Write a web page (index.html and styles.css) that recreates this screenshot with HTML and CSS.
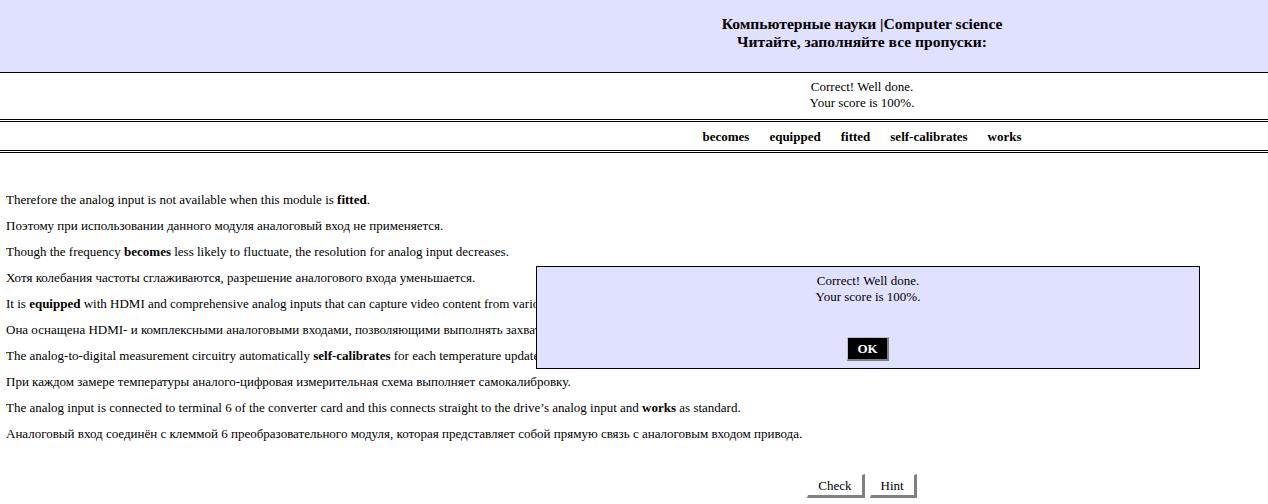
FILE: index.html
```html
<!DOCTYPE html>
<html>
<head>
<meta charset="utf-8">
<title>Computer science</title>
<link rel="stylesheet" href="styles.css">
</head>
<body>
<div class="title-block">
  <div class="centered">
    <h2 class="exercise-title">Компьютерные науки |Computer science</h2>
    <h3 class="exercise-subtitle">Читайте, заполняйте все пропуски:</h3>
  </div>
</div>
<div class="feedback-bar">
  <div class="centered">Correct! Well done.<br>Your score is 100%.</div>
</div>
<div class="word-list">
  <div class="centered words">
    <span>becomes</span><span>equipped</span><span>fitted</span><span>self-calibrates</span><span>works</span>
  </div>
</div>
<div class="main">
  <p>Therefore the analog input is not available when this module is <b>fitted</b>.</p>
  <p>Поэтому при использовании данного модуля аналоговый вход не применяется.</p>
  <p>Though the frequency <b>becomes</b> less likely to fluctuate, the resolution for analog input decreases.</p>
  <p>Хотя колебания частоты сглаживаются, разрешение аналогового входа уменьшается.</p>
  <p>It is <b>equipped</b> with HDMI and comprehensive analog inputs that can capture video content from various analog and digital sources.</p>
  <p>Она оснащена HDMI- и комплексными аналоговыми входами, позволяющими выполнять захват видео с различных аналоговых и цифровых источников.</p>
  <p>The analog-to-digital measurement circuitry automatically <b>self-calibrates</b> for each temperature update.</p>
  <p>При каждом замере температуры аналого-цифровая измерительная схема выполняет самокалибровку.</p>
  <p>The analog input is connected to terminal 6 of the converter card and this connects straight to the drive’s analog input and <b>works</b> as standard.</p>
  <p>Аналоговый вход соединён с клеммой 6 преобразовательного модуля, которая представляет собой прямую связь с аналоговым входом привода.</p>
</div>
<div class="buttons">
  <div class="centered">
    <button class="btn">Check</button><button class="btn">Hint</button>
  </div>
</div>
<div class="feedback-box">
  <div class="fb-text">Correct! Well done.<br>Your score is 100%.</div>
  <button class="ok-btn">OK</button>
</div>
</body>
</html>
```
FILE: styles.css
```css
html, body {
  margin: 0;
  padding: 0;
  background: #ffffff;
  color: #000000;
  font-family: "Liberation Serif", "Times New Roman", serif;
  font-size: 13px;
}
.centered {
  margin-left: 456px;
  text-align: center;
}
.title-block {
  background: #e0e0ff;
  border-bottom: 1px solid #000;
  height: 72px;
  box-sizing: content-box;
}
.exercise-title, .exercise-subtitle {
  margin: 0;
  font-size: 15.6px;
  font-weight: bold;
  line-height: 18px;
}
.exercise-title {
  padding-top: 15px;
}
.feedback-bar {
  height: 49px;
  line-height: 16px;
  padding-top: 6px;
  box-sizing: border-box;
  border-bottom: 3px double #000;
}
.word-list {
  height: 31px;
  box-sizing: border-box;
  border-bottom: 3px double #000;
  font-weight: bold;
}
.words {
  display: flex;
  justify-content: center;
  gap: 20px;
  line-height: 16px;
  padding-top: 7px;
}
.main {
  padding: 39px 6px 0 6px;
}
.main p {
  margin: 0 0 10px 0;
  line-height: 16px;
}
.buttons {
  padding-top: 22px;
}
.buttons .centered {
  display: flex;
  justify-content: center;
  gap: 5px;
}
.btn {
  font-family: "Liberation Serif", "Times New Roman", serif;
  font-size: 13px;
  background: #fff;
  color: #000;
  padding: 3px 10px 1px 10px;
  border-style: solid;
  border-width: 1px 3px 3px 1px;
  border-color: #ffffff #808080 #808080 #ffffff;
  line-height: 16px;
}
.feedback-box {
  position: absolute;
  left: 536px;
  top: 266px;
  width: 662px;
  height: 101px;
  background: #e0e0ff;
  border: 1px solid #000;
  text-align: center;
}
.fb-text {
  padding-top: 6px;
  line-height: 16px;
}
.ok-btn {
  margin-top: 32px;
  font-family: "Liberation Serif", "Times New Roman", serif;
  font-size: 13px;
  font-weight: bold;
  background: #000;
  color: #fff;
  padding: 3px 9px 2px 9px;
  border-style: solid;
  border-width: 1px 2px 2px 1px;
  border-color: #c0c0c0 #808080 #808080 #c0c0c0;
  line-height: 16px;
}
```
